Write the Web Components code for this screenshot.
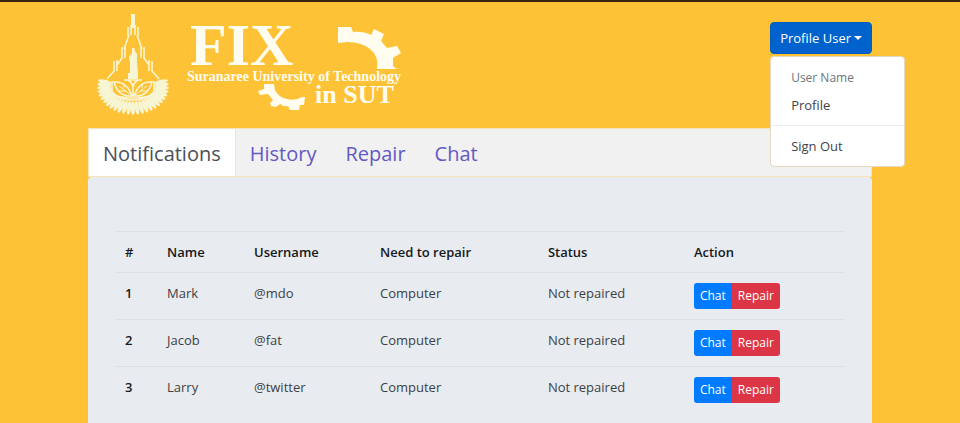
<!DOCTYPE html>
<html lang="en">
<head>
<meta charset="utf-8">
<meta name="viewport" content="width=device-width, initial-scale=1">
<title>FIX in SUT</title>
<style>
  body {
    margin: 0;
    min-height: 100vh;
    box-sizing: border-box;
    border-top: 2px solid #3b2411;
    background: #fec236;
    color: #212529;
    font: 13px/20px "Open Sans", "Noto Sans", sans-serif;
  }
</style>
</head>
<body>
<repair-page>
  <fix-logo slot="logo"></fix-logo>
  <user-menu slot="user" label="Profile User">
    <span slot="header">User Name</span>
    <a slot="item" href="#profile">Profile</a>
    <a slot="footer" href="#signout">Sign Out</a>
  </user-menu>
  <nav-tabs slot="tabs">
    <a href="#notifications" aria-current="page">Notifications</a>
    <a href="#history">History</a>
    <a href="#repair">Repair</a>
    <a href="#chat">Chat</a>
  </nav-tabs>
  <repair-table></repair-table>
</repair-page>

<script>
class RepairPage extends HTMLElement {
  constructor() {
    super();
    this.attachShadow({ mode: 'open' });
  }

  connectedCallback() {
    this.shadowRoot.innerHTML = `
      <style>
        :host {
          display: block;
          max-width: 784px;
          margin: 0 auto;
        }
        header {
          display: flex;
          justify-content: space-between;
          align-items: flex-start;
          padding: 10px 0 12px 8px;
        }
        .user {
          padding-top: 10px;
        }
        main {
          box-sizing: border-box;
          min-height: calc(100vh - 177px);
          padding: 54px 27px 27px;
          border-radius: 4px 4px 0 0;
          background: #e8ebf0;
        }
      </style>
      <header>
        <slot name="logo"></slot>
        <div class="user"><slot name="user"></slot></div>
      </header>
      <slot name="tabs"></slot>
      <main><slot></slot></main>
    `;
  }
}

class FixLogo extends HTMLElement {
  constructor() {
    super();
    this.attachShadow({ mode: 'open' });
  }

  // petals around the lower half of the emblem
  #petals() {
    let out = '';
    for (let a = -14; a <= 194; a += 8) {
      const r = a * Math.PI / 180;
      const x = (133 + 29 * Math.cos(r)).toFixed(1);
      const y = (87 + 21 * Math.sin(r)).toFixed(1);
      out += `<ellipse cx="${x}" cy="${y}" rx="7" ry="2.1" transform="rotate(${a} ${x} ${y})"/>`;
    }
    return out;
  }

  connectedCallback() {
    this.shadowRoot.innerHTML = `
      <style>
        :host {
          display: block;
        }
        svg {
          display: block;
          overflow: visible;
        }
        text {
          font-family: "Liberation Serif", serif;
          font-weight: bold;
        }
      </style>
      <svg width="308" height="104" viewBox="96 12 308 104" fill="#fffdf0" role="img" aria-label="FIX in SUT">
        <g fill="#f7f6d4">${this.#petals()}</g>
        <g fill="none" stroke="#f7f6d4" stroke-width="1.6">
          <path d="M133 14v14" stroke-width="4"/>
          <path d="M131 25v10M128 27v9M129 35l-5 14M122 47v12M125 47v11M122 58l-5 7M114 61v11M117 60v11M114 71l-7 8"/>
          <path d="M135 25v10M138 27v9M137 35l5 14M144 47v12M141 47v11M144 58l5 7M152 61v11M149 60v11M152 71l7 8"/>
          <path d="M112 81v10q3 7 21 7t21-7V81M111 88q-4 2-1 5q10 7 23 7t23-7q3-3-1-5"/>
          <path d="M132 96q-14 1-18-14q13-1 18 14zM134 96q14 1 18-14q-13-1-18 14zM133 96V86M124 80h18M128 80q5 3 5 8q0-5 5-8" stroke-width="1.5"/>
          <path d="M131 95l-12-9M126 91h-7M124 88v-4M135 95l12-9M140 91h7M142 88v-4" stroke-width="1"/>
        </g>
        <path d="M132 48q3-1 3 3l2 3v8l1 11h-8v-11l-1-5 3-4zM128 73h10v6h-10z" fill="#f7f6d4"/>
        <text x="190" y="65" font-size="60">FIX</text>
        <text x="187" y="81" font-size="14">Suranaree University of Technology</text>
        <text x="315" y="103" font-size="26">in SUT</text>
        <path d="M338 27h13l2 5q10-1 18 3l3-6 10 5-3 7 6 7 10-2 4 7-8 5v8q2 3 6 3h-22q2-13-7-20t-22-7l-10 1z"/>
        <path d="M264 84h10l1 6q3 7 12 9t15-2h3l-1 8h-4l-1 5h-9l-2-4q-4 1-8-2l-4 3-5-1-1-3 3-3-5-6-8 1-2-4 6-2z"/>
      </svg>
    `;
  }
}

class UserMenu extends HTMLElement {
  constructor() {
    super();
    this.attachShadow({ mode: 'open' });
  }

  connectedCallback() {
    this.shadowRoot.innerHTML = `
      <style>
        :host {
          display: block;
          position: relative;
        }
        button {
          display: flex;
          align-items: center;
          gap: 3px;
          height: 32px;
          padding: 0 9px;
          border: 1px solid #005cbf;
          border-radius: 4px;
          background: #0062cc;
          color: #fff;
          font: inherit;
          cursor: pointer;
        }
        button::after {
          content: "";
          border: 4px solid transparent;
          border-top-color: #fff;
          border-bottom: 0;
        }
        .menu {
          position: absolute;
          top: 100%;
          left: 0;
          z-index: 1;
          box-sizing: border-box;
          width: 135px;
          margin-top: 2px;
          padding: 8px 0 6px;
          border: 1px solid #e3d9c0;
          border-radius: 4px;
          background: #fff;
        }
        .menu[hidden] {
          display: none;
        }
        ::slotted(*) {
          display: block;
          padding: 3px 20px 4px;
          color: #3f4448;
          text-decoration: none;
        }
        ::slotted(span) {
          color: #6c757d;
          font-size: 12px;
        }
        hr {
          height: 1px;
          margin: 6px 0 7px;
          border: 0;
          background: #e9ecef;
        }
      </style>
      <button type="button" aria-haspopup="true" aria-expanded="true">${this.getAttribute('label')}</button>
      <div class="menu">
        <slot name="header"></slot>
        <slot name="item"></slot>
        <hr>
        <slot name="footer"></slot>
      </div>
    `;

    const button = this.shadowRoot.querySelector('button');
    const menu = this.shadowRoot.querySelector('.menu');
    button.addEventListener('click', () => {
      menu.hidden = !menu.hidden;
      button.setAttribute('aria-expanded', String(!menu.hidden));
    });
  }
}

class NavTabs extends HTMLElement {
  constructor() {
    super();
    this.attachShadow({ mode: 'open' });
  }

  connectedCallback() {
    this.shadowRoot.innerHTML = `
      <style>
        :host {
          display: block;
        }
        nav {
          display: flex;
          border: 1px solid #f6e3b8;
          background: #f1f1f1;
        }
        ::slotted(a) {
          padding: 9px 14px 7px;
          border-right: 1px solid transparent;
          color: #6459c4;
          font-size: 20px;
          line-height: 31px;
          text-decoration: none;
        }
        ::slotted(a[aria-current]) {
          border-right-color: #e4e4e4;
          background: #fff;
          color: #495057;
        }
      </style>
      <nav><slot></slot></nav>
    `;
  }
}

class ActionGroup extends HTMLElement {
  constructor() {
    super();
    this.attachShadow({ mode: 'open' });
  }

  connectedCallback() {
    this.shadowRoot.innerHTML = `
      <style>
        :host {
          display: flex;
        }
        button {
          height: 26px;
          padding: 0 6px;
          border: 0;
          color: #fff;
          font: inherit;
          font-size: 12px;
          cursor: pointer;
        }
        .chat {
          border-radius: 3px 0 0 3px;
          background: #007bff;
        }
        .repair {
          border-radius: 0 3px 3px 0;
          background: #dc3545;
        }
      </style>
      <button type="button" class="chat">Chat</button>
      <button type="button" class="repair">Repair</button>
    `;
  }
}

class RepairTable extends HTMLElement {
  #rows = [
    ['Mark', '@mdo', 'Computer', 'Not repaired'],
    ['Jacob', '@fat', 'Computer', 'Not repaired'],
    ['Larry', '@twitter', 'Computer', 'Not repaired'],
  ];

  constructor() {
    super();
    this.attachShadow({ mode: 'open' });
  }

  connectedCallback() {
    this.shadowRoot.innerHTML = `
      <style>
        :host {
          display: block;
        }
        table {
          width: 100%;
          border-collapse: collapse;
          table-layout: fixed;
        }
        th, td {
          box-sizing: border-box;
          padding: 10px;
          border-top: 1px solid #dcdfe4;
          text-align: left;
          vertical-align: top;
        }
        th {
          font-weight: 600;
          color: #16191c;
        }
        td {
          color: #3c4146;
        }
        .num { width: 42px; }
        .name { width: 87px; }
        .username { width: 126px; }
        .need { width: 23%; }
        .status { width: 20%; }
      </style>
      <table>
        <thead>
          <tr>
            <th class="num" scope="col">#</th>
            <th class="name" scope="col">Name</th>
            <th class="username" scope="col">Username</th>
            <th class="need" scope="col">Need to repair</th>
            <th class="status" scope="col">Status</th>
            <th scope="col">Action</th>
          </tr>
        </thead>
        <tbody>
          ${this.#rows.map((row, i) => `
            <tr>
              <th scope="row">${i + 1}</th>
              ${row.map((cell) => `<td>${cell}</td>`).join('')}
              <td><action-group></action-group></td>
            </tr>
          `).join('')}
        </tbody>
      </table>
    `;
  }
}

customElements.define('repair-page', RepairPage);
customElements.define('fix-logo', FixLogo);
customElements.define('user-menu', UserMenu);
customElements.define('nav-tabs', NavTabs);
customElements.define('action-group', ActionGroup);
customElements.define('repair-table', RepairTable);
</script>
</body>
</html>
